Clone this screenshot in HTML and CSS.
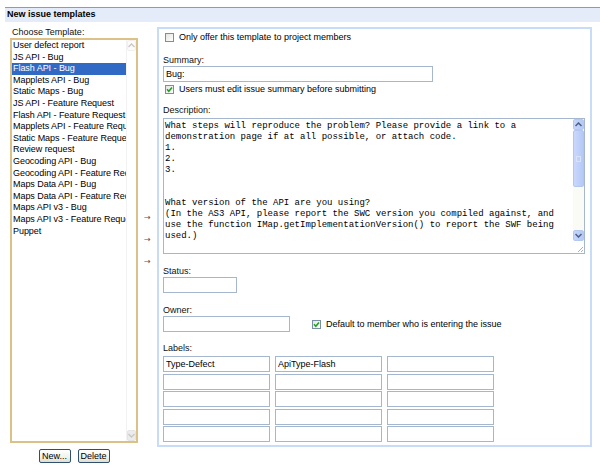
FILE: index.html
```html
<!DOCTYPE html>
<html>
<head>
<meta charset="utf-8">
<title>New issue templates</title>
<link rel="stylesheet" href="styles.css">
</head>
<body>
<div class="page">
  <div class="title">New issue templates</div>
  <div class="main">
    <div class="left">
      <div class="choose">Choose Template:</div>
      <div class="listbox">
        <div class="items">
          <div class="item">User defect report</div>
          <div class="item">JS API - Bug</div>
          <div class="item selected">Flash API - Bug</div>
          <div class="item">Mapplets API - Bug</div>
          <div class="item">Static Maps - Bug</div>
          <div class="item">JS API - Feature Request</div>
          <div class="item">Flash API - Feature Request</div>
          <div class="item">Mapplets API - Feature Request</div>
          <div class="item">Static Maps - Feature Request</div>
          <div class="item">Review request</div>
          <div class="item">Geocoding API - Bug</div>
          <div class="item">Geocoding API - Feature Request</div>
          <div class="item">Maps Data API - Bug</div>
          <div class="item">Maps Data API - Feature Request</div>
          <div class="item">Maps API v3 - Bug</div>
          <div class="item">Maps API v3 - Feature Request</div>
          <div class="item">Puppet</div>
        </div>
        <div class="lscroll">
          <div class="lbtn"><svg width="7" height="5" viewBox="0 0 7 5"><path d="M0.5 4 L3.5 1 L6.5 4" fill="none" stroke="#c8c8c8" stroke-width="1.4"/></svg></div>
          <div class="ltrack"></div>
          <div class="lbtn down"><svg width="7" height="5" viewBox="0 0 7 5"><path d="M0.5 1 L3.5 4 L6.5 1" fill="none" stroke="#c8c8c8" stroke-width="1.4"/></svg></div>
        </div>
      </div>
      <div class="buttons">
        <button class="btn">New...</button>
        <button class="btn">Delete</button>
      </div>
    </div>
    <div class="arrows">
      <div class="arrow">&rarr;</div>
      <div class="arrow">&rarr;</div>
      <div class="arrow">&rarr;</div>
    </div>
    <div class="panel">
      <div class="cbrow row-first"><span class="cb"></span><span>Only offer this template to project members</span></div>
      <div class="flabel lbl-summary">Summary:</div>
      <input class="field summary" type="text" value="Bug:">
      <div class="cbrow row-second"><span class="cb"><svg width="7" height="7" viewBox="0 0 7 7"><path d="M1 3.3 L2.8 5.2 L6 1.5" fill="none" stroke="#21a121" stroke-width="1.6"/></svg></span><span>Users must edit issue summary before submitting</span></div>
      <div class="flabel lbl-desc">Description:</div>
      <div class="textarea">
        <div class="tatext">What steps will reproduce the problem? Please provide a link to a
demonstration page if at all possible, or attach code.
1.
2.
3.


What version of the API are you using?
(In the AS3 API, please report the SWC version you compiled against, and
use the function IMap.getImplementationVersion() to report the SWF being
used.)</div>
        <div class="tscroll">
          <div class="tbtn"><svg width="7" height="5" viewBox="0 0 7 5"><path d="M0.5 4 L3.5 1 L6.5 4" fill="none" stroke="#4d6185" stroke-width="1.5"/></svg></div>
          <div class="thumb"><span class="grip"></span></div>
          <div class="ttrack"></div>
          <div class="tbtn"><svg width="7" height="5" viewBox="0 0 7 5"><path d="M0.5 1 L3.5 4 L6.5 1" fill="none" stroke="#4d6185" stroke-width="1.5"/></svg></div>
          <div class="corner"><svg width="9" height="9" viewBox="0 0 9 9"><path d="M8 3 L3 8 M8 6 L6 8" stroke="#b0b0b0" stroke-width="1"/></svg></div>
        </div>
      </div>
      <div class="flabel lbl-status">Status:</div>
      <input class="field status" type="text" value="">
      <div class="flabel lbl-owner">Owner:</div>
      <div class="ownerrow">
        <input class="field owner" type="text" value="">
        <div class="cbrow default"><span class="cb"><svg width="7" height="7" viewBox="0 0 7 7"><path d="M1 3.3 L2.8 5.2 L6 1.5" fill="none" stroke="#21a121" stroke-width="1.6"/></svg></span><span>Default to member who is entering the issue</span></div>
      </div>
      <div class="flabel lbl-labels">Labels:</div>
      <div class="labelgrid">
        <input class="field" type="text" value="Type-Defect">
        <input class="field" type="text" value="ApiType-Flash">
        <input class="field" type="text" value="">
        <input class="field" type="text" value="">
        <input class="field" type="text" value="">
        <input class="field" type="text" value="">
        <input class="field" type="text" value="">
        <input class="field" type="text" value="">
        <input class="field" type="text" value="">
        <input class="field" type="text" value="">
        <input class="field" type="text" value="">
        <input class="field" type="text" value="">
        <input class="field" type="text" value="">
        <input class="field" type="text" value="">
        <input class="field" type="text" value="">
      </div>
    </div>
  </div>
</div>
</body>
</html>
```
FILE: styles.css
```css
* { box-sizing: border-box; }
html, body { margin: 0; padding: 0; background: #fff; }
body {
  font-family: "Liberation Sans", Arial, sans-serif;
  font-size: 9px;
  color: #000;
  width: 600px;
  height: 472px;
  overflow: hidden;
}
.page { padding: 7px 0 0 5px; }
.title {
  border-top: 1px solid #7f9bd3;
  background: #e5ecf9;
  height: 15px;
  line-height: 13px;
  font-weight: bold;
  padding-left: 2px;
}
.main { display: flex; padding-left: 5px; }

/* left column */
.left { width: 128px; padding-top: 5px; }
.choose { line-height: 11px; height: 11px; padding-left: 2px; color: #111; }
.listbox {
  height: 405px;
  border: 2px solid #dcc186;
  display: flex;
  background: #fff;
}
.items { flex: 1; min-width: 0; }
.item {
  line-height: 11.6px;
  height: 11.6px;
  padding-left: 1px;
  letter-spacing: -0.05px;
  white-space: nowrap;
  overflow: hidden;
}
.item.selected { background: #316ac5; color: #fff; }
.lscroll {
  width: 10px;
  display: flex;
  flex-direction: column;
  border-left: 1px solid #f2f2f2;
}
.lbtn {
  height: 11px;
  display: flex;
  align-items: center;
  justify-content: center;
  border: 1px solid #f0f0f0;
  border-radius: 2px;
  background: #fbfbfb;
}
.lbtn.down { background: #ececec; border-color: #e4e4e4; }
.ltrack { flex: 1; }
.buttons {
  display: flex;
  justify-content: center;
  gap: 7px;
  margin-top: 6px;
}
.btn {
  font: inherit;
  font-size: 9px;
  width: 32px;
  height: 14px;
  padding: 0;
  border: 1px solid #30506f;
  border-radius: 2px;
  background: linear-gradient(#ffffff, #f2f1ea 60%, #e0ded2);
  color: #000;
  line-height: 12px;
}

/* arrows column */
.arrows { width: 19px; padding-top: 185px; padding-left: 6px; }
.arrow {
  height: 22px;
  line-height: 22px;
  font-family: "DejaVu Sans", sans-serif;
  font-size: 8px;
  color: #555;
}

/* panel */
.panel {
  width: 435px;
  height: 420px;
  margin-top: 5px;
  border: 2px solid #c8dbf7;
  padding: 3px 0 0 4px;
}
.cbrow {
  display: flex;
  align-items: center;
  height: 10px;
  line-height: 10px;
  gap: 5px;
  white-space: nowrap;
}
.cbrow.row-first, .cbrow.row-second { padding-left: 2px; }
.cb {
  width: 9px;
  height: 9px;
  border: 1px solid #7b8ea6;
  background: linear-gradient(135deg, #e4e4e0, #ffffff);
  display: flex;
  align-items: center;
  justify-content: center;
  flex: none;
}
.flabel { line-height: 11px; height: 11px; color: #111; }
.lbl-summary { margin-top: 13px; }
.row-second { margin-top: 2px; }
.lbl-desc { margin-top: 11px; }
.lbl-status { margin-top: 12px; }
.lbl-owner { margin-top: 12px; }
.lbl-labels { margin-top: 11px; }

.field {
  display: block;
  font: inherit;
  font-size: 9px;
  height: 16px;
  border: 1px solid #a5b7cf;
  padding: 0 2px;
  margin: 0;
  background: #fff;
  color: #000;
  outline: none;
}
.summary { width: 270px; }
.status { width: 74px; }
.owner { width: 127px; }
.ownerrow { display: flex; align-items: center; gap: 22px; }
.cbrow.default { height: 16px; }

.textarea {
  margin-top: 2px;
  width: 422px;
  height: 136px;
  border: 1px solid #a5b7cf;
  display: flex;
}
.tatext {
  flex: 1;
  font-family: "Liberation Mono", "Courier New", monospace;
  font-size: 9px;
  line-height: 11px;
  white-space: pre;
  padding: 1.5px 0 0 1px;
  overflow: hidden;
}
.tscroll {
  width: 11px;
  display: flex;
  flex-direction: column;
  background: #fbfbf5;
}
.tbtn {
  height: 11px;
  display: flex;
  align-items: center;
  justify-content: center;
  background: linear-gradient(90deg, #c6d6fb, #b5c9f7);
  border: 1px solid #b7c8ef;
  border-radius: 2px;
}
.thumb {
  height: 57px;
  background: linear-gradient(90deg, #c9d8fc, #b5c9f7);
  border: 1px solid #b4c6ee;
  border-radius: 2px;
  display: flex;
  align-items: center;
  justify-content: center;
}
.grip { width: 5px; height: 6px; border: 1px solid #d8e3fb; }
.ttrack { flex: 1; }
.corner {
  height: 12px;
  background: #fff;
  display: flex;
  align-items: flex-end;
  justify-content: flex-end;
}

.labelgrid {
  margin-top: 2px;
  display: grid;
  grid-template-columns: 107px 107px 107px;
  column-gap: 5px;
  row-gap: 1.6px;
}
.labelgrid .field { width: 107px; }
```
